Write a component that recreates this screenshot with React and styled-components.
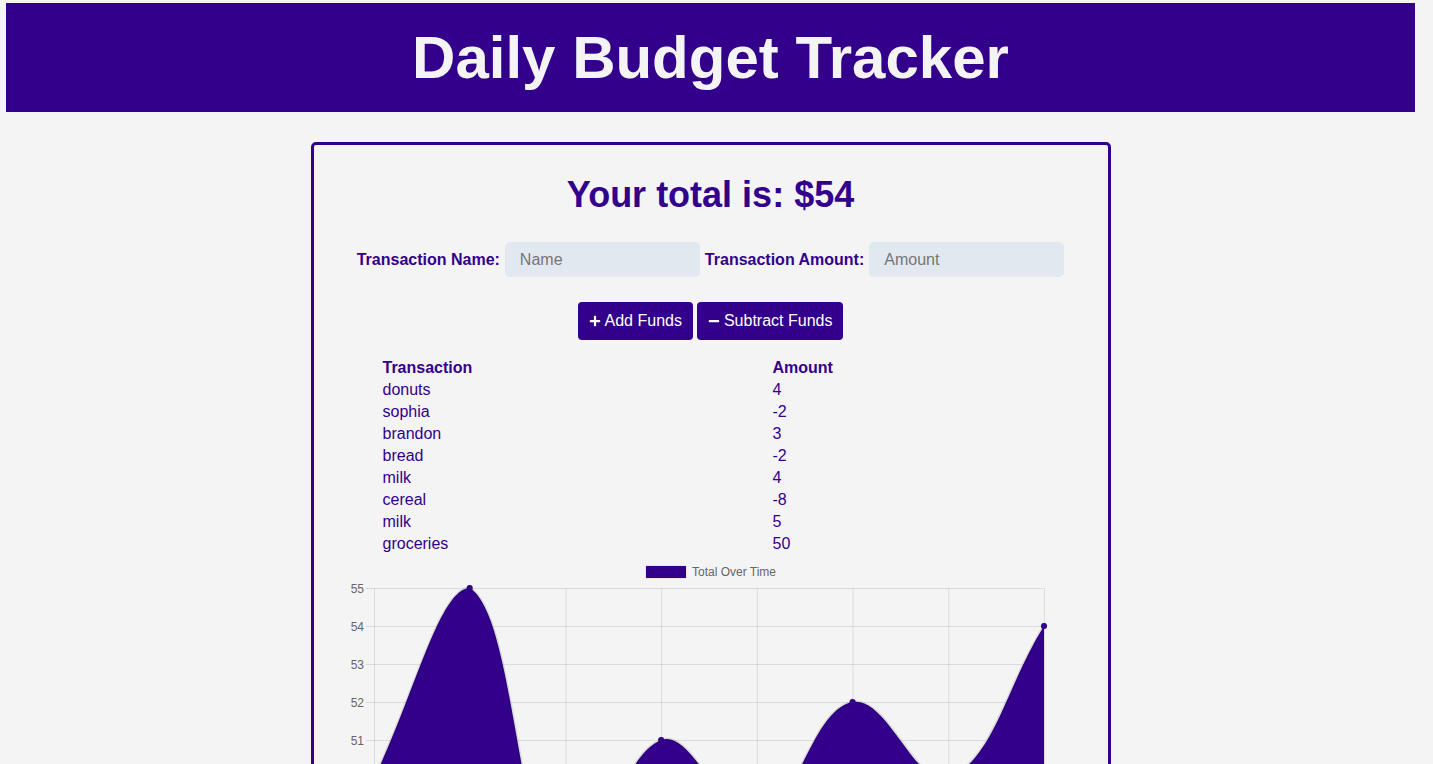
import styled, { createGlobalStyle } from "styled-components"
import { useState } from "react"
import { FaPlus, FaMinus } from "react-icons/fa"

const purple = "#33008c"

const transactions = [
  { name: "donuts", value: 4 },
  { name: "sophia", value: -2 },
  { name: "brandon", value: 3 },
  { name: "bread", value: -2 },
  { name: "milk", value: 4 },
  { name: "cereal", value: -8 },
  { name: "milk", value: 5 },
  { name: "groceries", value: 50 },
]

const GlobalStyle = createGlobalStyle`
  body{
    margin:0;
    background:#f4f4f4;
    font-family:"Liberation Sans", Arial, sans-serif;
  }
`

// chart.js style cubic spline, tension 0.4
const buildChart = (values, box) => {
  const { left, right, top, bottom, min, max } = box
  const step = (right - left) / (values.length - 1)
  const unit = (bottom - top) / (max - min)
  const pts = values.map((v, i) => ({ x: left + i * step, y: top + (max - v) * unit }))
  const t = 0.4
  const cap = (p) => ({
    x: Math.min(right, Math.max(left, p.x)),
    y: Math.min(bottom, Math.max(top, p.y)),
  })
  const ctrl = pts.map((cur, i) => {
    const prev = pts[i - 1] || cur
    const next = pts[i + 1] || cur
    const d01 = Math.hypot(cur.x - prev.x, cur.y - prev.y)
    const d12 = Math.hypot(next.x - cur.x, next.y - cur.y)
    let s01 = d01 / (d01 + d12)
    let s12 = d12 / (d01 + d12)
    s01 = isNaN(s01) ? 0 : s01
    s12 = isNaN(s12) ? 0 : s12
    const fa = t * s01
    const fb = t * s12
    return {
      before: cap({ x: cur.x - fa * (next.x - prev.x), y: cur.y - fa * (next.y - prev.y) }),
      after: cap({ x: cur.x + fb * (next.x - prev.x), y: cur.y + fb * (next.y - prev.y) }),
    }
  })
  let line = `M${pts[0].x},${pts[0].y}`
  for (let i = 1; i < pts.length; i++) {
    const a = ctrl[i - 1].after
    const b = ctrl[i].before
    line += ` C${a.x},${a.y} ${b.x},${b.y} ${pts[i].x},${pts[i].y}`
  }
  const area = `${line} L${right},${bottom} L${left},${bottom} Z`
  return { pts, line, area, step, unit }
}

const Chart = ({ data }) => {
  let running = 0
  const totals = [...data].reverse().map((t) => (running += t.value))
  const box = { left: 33, right: 703, top: 28, bottom: 332, min: 47, max: 55 }
  const { pts, line, area, unit } = buildChart(totals, box)
  const ticks = []
  for (let v = box.max; v >= box.min; v--) ticks.push(v)
  const grid = "rgba(0,0,0,0.1)"
  return (
    <ChartSvg width="740" height="360" viewBox="0 0 740 360">
      <rect x="305" y="6" width="40" height="12" fill={purple} stroke={grid} strokeWidth="1" />
      <text x="351" y="16" fontSize="12" fill="#666">Total Over Time</text>
      {ticks.map((v) => {
        const y = box.top + (box.max - v) * unit + 0.5
        return (
          <g key={v}>
            <line x1={box.left - 8} x2={box.right} y1={y} y2={y} stroke={grid} />
            <text x={box.left - 10} y={y + 4} fontSize="12" fill="#666" textAnchor="end">{v}</text>
          </g>
        )
      })}
      {pts.map((p, i) => (
        <line key={i} x1={p.x + 0.5} x2={p.x + 0.5} y1={box.top} y2={box.bottom + 8} stroke={grid} />
      ))}
      <path d={area} fill={purple} />
      <path d={line} fill="none" stroke={grid} strokeWidth="3" />
      {pts.map((p, i) => (
        <circle key={i} cx={p.x} cy={p.y} r="3" fill={purple} stroke={grid} strokeWidth="1" />
      ))}
    </ChartSvg>
  )
}

export default function App() {
  const [name, setName] = useState("")
  const [amount, setAmount] = useState("")
  const total = transactions.reduce((s, t) => s + t.value, 0)
  return (
    <>
      <GlobalStyle />
      <Page>
        <Header>
          <Title>Daily Budget Tracker</Title>
        </Header>
        <Card>
          <Total>Your total is: ${total}</Total>
          <Form>
            <Label htmlFor="t-name">Transaction Name:</Label>
            <Input id="t-name" placeholder="Name" value={name} onChange={(e) => setName(e.target.value)} />
            <Label htmlFor="t-amount">Transaction Amount:</Label>
            <Input id="t-amount" type="number" placeholder="Amount" value={amount} onChange={(e) => setAmount(e.target.value)} />
          </Form>
          <Buttons>
            <Button><FaPlus size={12} /> Add Funds</Button>
            <Button><FaMinus size={12} /> Subtract Funds</Button>
          </Buttons>
          <Table>
            <thead>
              <tr>
                <Th>Transaction</Th>
                <Th>Amount</Th>
              </tr>
            </thead>
            <tbody>
              {transactions.map((t, i) => (
                <tr key={i}>
                  <Td>{t.name}</Td>
                  <Td>{t.value}</Td>
                </tr>
              ))}
            </tbody>
          </Table>
          <Chart data={transactions} />
        </Card>
      </Page>
    </>
  )
}

const Page = styled.div`
  padding:3px 18px 28px 6px;
`
const Header = styled.header`
  height:109px;
  background:${purple};
  display:flex;
  align-items:center;
  justify-content:center;
`
const Title = styled.h1`
  margin:0;
  font-size:60px;
  font-weight:700;
  color:#f4f4f4;
`
const Card = styled.main`
  width:800px;
  box-sizing:border-box;
  margin:30px auto 0;
  border:3px solid ${purple};
  border-radius:5px;
  padding:29px 0 20px;
`
const Total = styled.h2`
  margin:0;
  font-size:36px;
  line-height:42px;
  text-align:center;
  color:${purple};
`
const Form = styled.div`
  display:flex;
  justify-content:center;
  align-items:center;
  gap:5px;
  margin-top:26px;
`
const Label = styled.label`
  font-size:16px;
  font-weight:700;
  color:${purple};
`
const Input = styled.input`
  width:195px;
  height:35px;
  box-sizing:border-box;
  border:none;
  outline:none;
  border-radius:5px;
  background:#e2e8f0;
  padding:0 15px;
  font-family:inherit;
  font-size:16px;
  color:#333;
  &::placeholder{
    color:#757575;
  }
  &::-webkit-inner-spin-button{
    display:none;
  }
`
const Buttons = styled.div`
  display:flex;
  justify-content:center;
  gap:4px;
  margin-top:25px;
`
const Button = styled.button`
  height:38px;
  padding:0 11px;
  display:inline-flex;
  align-items:center;
  gap:4px;
  border:none;
  border-radius:4px;
  background:${purple};
  color:#fff;
  font-family:inherit;
  font-size:16px;
  cursor:pointer;
`
const Table = styled.table`
  width:656px;
  margin:17px auto 0;
  border-collapse:collapse;
  color:${purple};
  font-size:16px;
  & th:first-child, & td:first-child{
    width:390px;
  }
`
const Th = styled.th`
  padding:0;
  line-height:22px;
  text-align:left;
  font-weight:700;
`
const Td = styled.td`
  padding:0;
  line-height:22px;
`
const ChartSvg = styled.svg`
  display:block;
  margin:5px auto 0;
  font-family:"Liberation Sans", Arial, sans-serif;
`
